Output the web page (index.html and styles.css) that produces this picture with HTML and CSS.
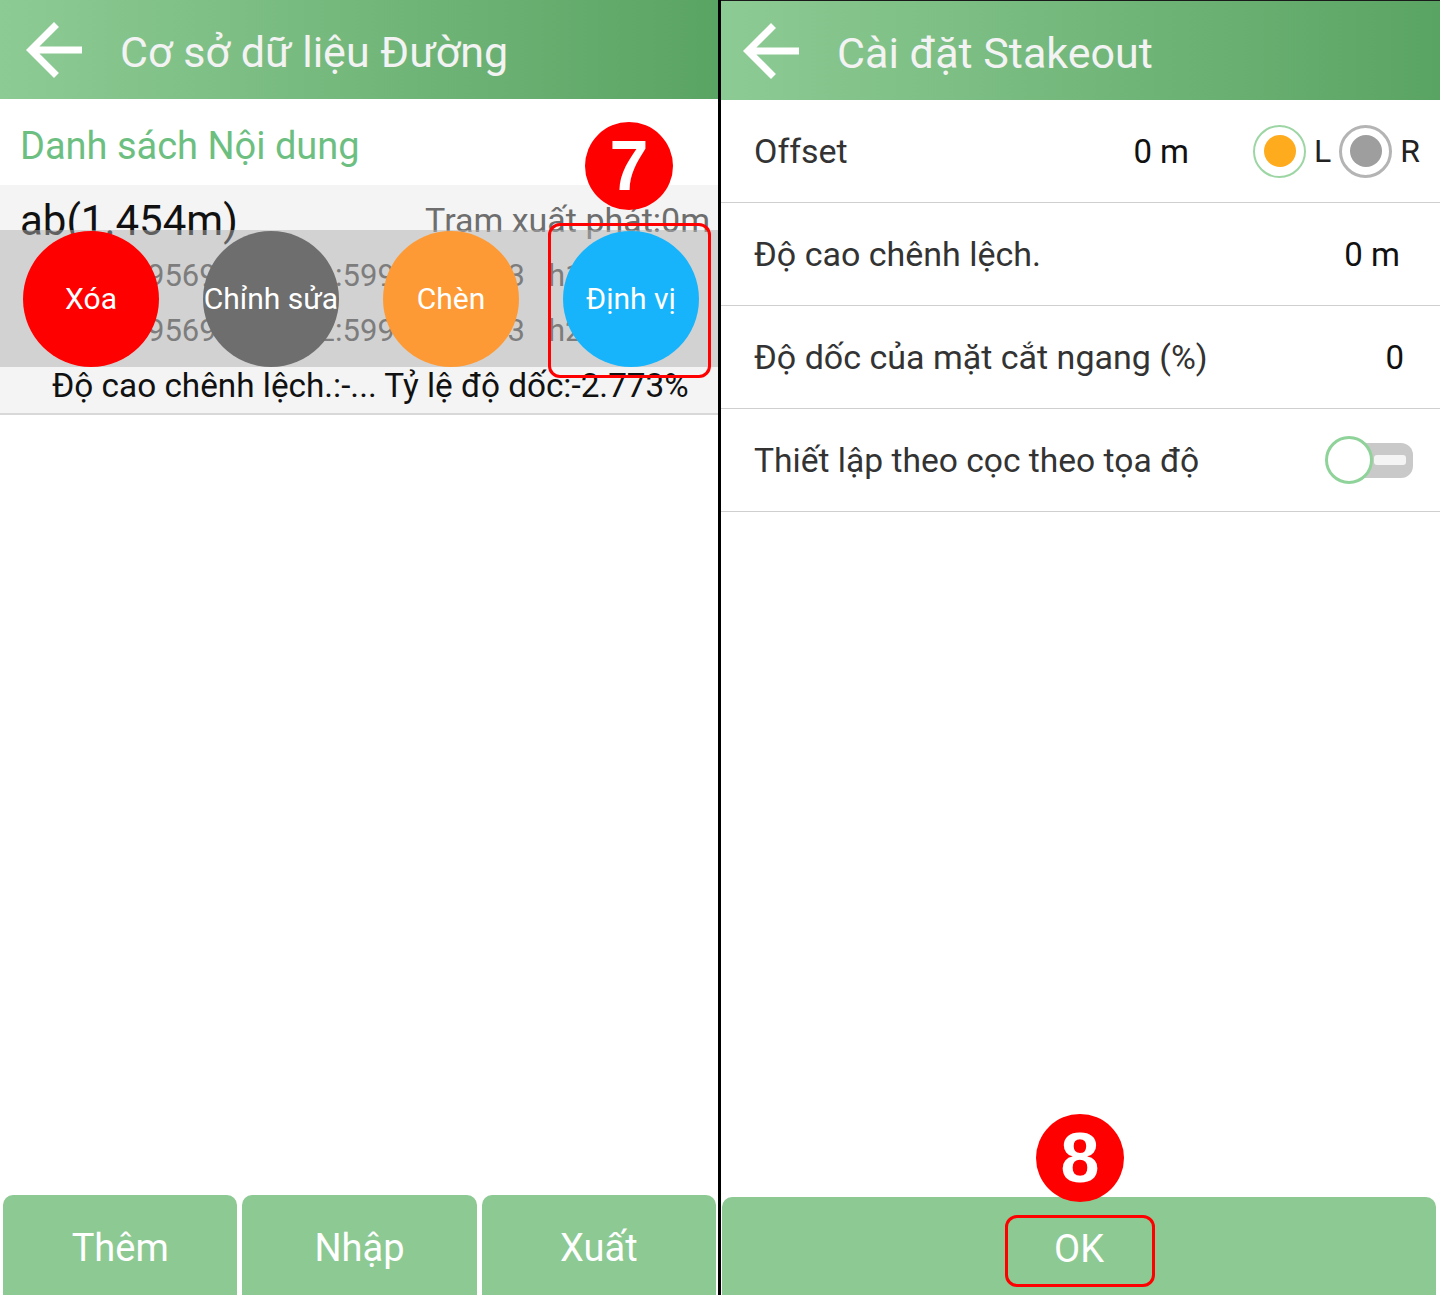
FILE: index.html
```html
<!DOCTYPE html>
<html lang="vi">
<head>
    <meta charset="UTF-8">
    <meta name="viewport" content="width=device-width, initial-scale=1.0">
    <title>Cơ sở dữ liệu Đường</title>
    <link rel="stylesheet" href="styles.css">
</head>
<body>
    <!-- Màn hình danh sách -->
    <section class="panel panel-left">
        <header class="topbar">
            <svg class="back" viewBox="0 0 24 24"><path d="M20 11H7.83l5.59-5.59L12 4l-8 8 8 8 1.41-1.41L7.83 13H20v-2z"/></svg>
            <h1>Cơ sở dữ liệu Đường</h1>
        </header>

        <div class="list-title">Danh sách Nội dung</div>

        <div class="road-row">
            <div class="line line-head">
                <span class="road-name">ab(1.454m)</span>
                <span class="road-start">Tram xuất phát:0m</span>
            </div>
            <div class="line line-coord">
                <span>x:122559569.41</span>
                <span>E1:5998062.153</span>
                <span>h1:0.000</span>
            </div>
            <div class="line line-coord">
                <span>x:122559569.41</span>
                <span>E2:5998062.153</span>
                <span>h2:0.000</span>
            </div>
            <div class="line line-foot">Độ cao chênh lệch.:-... Tỷ lệ độ dốc:-2.773%</div>

            <!-- Thanh thao tác khi vuốt dòng -->
            <div class="swipe-actions">
                <div class="action action-delete">Xóa</div>
                <div class="action action-edit">Chỉnh sửa</div>
                <div class="action action-insert">Chèn</div>
                <div class="action action-locate">Định vị</div>
            </div>
        </div>

        <div class="bottom-bar">
            <div class="btn">Thêm</div>
            <div class="btn">Nhập</div>
            <div class="btn">Xuất</div>
        </div>

        <div class="step-badge step-7">7</div>
        <div class="step-box box-locate"></div>
    </section>

    <div class="divider"></div>

    <!-- Màn hình cài đặt -->
    <section class="panel panel-right">
        <header class="topbar topbar-right">
            <svg class="back" viewBox="0 0 24 24"><path d="M20 11H7.83l5.59-5.59L12 4l-8 8 8 8 1.41-1.41L7.83 13H20v-2z"/></svg>
            <h1>Cài đặt Stakeout</h1>
        </header>

        <div class="setting setting-offset">
            <span class="label">Offset</span>
            <span class="value">0 m</span>
            <div class="radio-group">
                <span class="radio radio-on"><i></i></span>
                <span class="radio-text">L</span>
                <span class="radio radio-off"><i></i></span>
                <span class="radio-text">R</span>
            </div>
        </div>
        <div class="setting setting-height">
            <span class="label">Độ cao chênh lệch.</span>
            <span class="value">0 m</span>
        </div>
        <div class="setting setting-slope">
            <span class="label">Độ dốc của mặt cắt ngang (%)</span>
            <span class="value">0</span>
        </div>
        <div class="setting setting-switch">
            <span class="label">Thiết lập theo cọc theo tọa độ</span>
            <span class="switch"><span class="track"></span><span class="thumb"></span></span>
        </div>

        <div class="ok-bar">
            <div class="btn btn-ok">OK</div>
        </div>

        <div class="step-badge step-8">8</div>
        <div class="step-box box-ok"></div>
    </section>
</body>
</html>
```

FILE: styles.css
```css
* {
    box-sizing: border-box;
}
body {
    margin: 0;
    width: 1440px;
    height: 1295px;
    display: flex;
    background-color: #ffffff;
    font-family: Roboto, "Noto Sans", sans-serif;
    overflow: hidden;
}
.panel {
    position: relative;
    display: flex;
    flex-direction: column;
    height: 1295px;
    background-color: #ffffff;
}
.panel-left {
    width: 718px;
}
.panel-right {
    width: 719px;
}
.divider {
    width: 3px;
    background-color: #000000;
}

/* thanh tiêu đề */
.topbar {
    height: 99px;
    display: flex;
    align-items: center;
    background: linear-gradient(to right, #8dcb94, #5aa463);
    color: #f3f3f3;
}
.topbar-right {
    height: 100px;
    border-top: 1px solid #1a1a1a;
}
.topbar .back {
    width: 84px;
    height: 84px;
    margin-left: 12px;
    fill: #ffffff;
    flex-shrink: 0;
}
.topbar-right .back {
    margin-left: 8px;
}
.topbar h1 {
    margin: 0 0 0 24px;
    font-size: 43px;
    font-weight: 400;
    padding-top: 4px;
}
.topbar-right h1 {
    margin-left: 24px;
}

/* danh sách */
.list-title {
    height: 86px;
    line-height: 86px;
    padding: 4px 0 0 20px;
    font-size: 38px;
    color: #6dbf81;
}
.road-row {
    position: relative;
    padding-top: 8px;
    background-color: #f4f4f4;
    border-bottom: 2px solid #d8d8d8;
    white-space: nowrap;
    overflow: hidden;
}
.line {
    height: 55px;
    line-height: 55px;
}
.line-head {
    display: flex;
    justify-content: space-between;
    align-items: center;
    padding: 0 8px 0 20px;
}
.road-name {
    font-size: 42px;
    color: #111111;
}
.road-start {
    font-size: 34px;
    color: #6e6e6e;
}
.line-coord {
    display: grid;
    grid-template-columns: 263px 248px auto;
    padding-left: 37px;
    font-size: 31px;
    color: #4a4a4a;
}
.line-foot {
    padding-left: 52px;
    font-size: 33.3px;
    color: #111111;
}
.swipe-actions {
    position: absolute;
    top: 45px;
    left: 0;
    right: 0;
    height: 137px;
    display: flex;
    align-items: center;
    gap: 44px;
    padding-left: 23px;
    background-color: rgba(176, 176, 176, 0.5);
}
.action {
    width: 136px;
    height: 136px;
    border-radius: 50%;
    display: flex;
    align-items: center;
    justify-content: center;
    font-size: 30px;
    color: #ffffff;
    flex-shrink: 0;
}
.action-delete { background-color: #ff0000; }
.action-edit { background-color: #6e6e6e; }
.action-insert { background-color: #fd9a36; }
.action-locate { background-color: #18b4fb; }

/* nút dưới cùng */
.bottom-bar {
    margin-top: auto;
    height: 100px;
    display: grid;
    grid-template-columns: repeat(3, 1fr);
    gap: 5px;
    padding: 0 2px 0 3px;
}
.btn {
    display: flex;
    align-items: center;
    justify-content: center;
    padding-top: 6px;
    background-color: #8dc993;
    border-radius: 10px 10px 0 0;
    color: #ffffff;
    font-size: 38px;
}
.ok-bar {
    margin-top: auto;
    height: 98px;
    display: flex;
    padding-right: 4px;
    padding-left: 1px;
}
.btn-ok {
    flex: 1;
}

/* cài đặt */
.setting {
    height: 103px;
    display: flex;
    align-items: center;
    padding-left: 33px;
    border-bottom: 1px solid #cfcfcf;
    font-size: 33px;
}
.setting .label {
    flex: 1;
    font-size: 34px;
    color: #333333;
}
.setting .value {
    color: #111111;
}
.setting-offset {
    padding-right: 20px;
}
.setting-offset .value {
    margin-right: 64px;
}
.setting-height {
    padding-right: 40px;
}
.setting-slope {
    padding-right: 36px;
}
.setting-switch {
    padding-right: 27px;
}
.setting-switch .label {
    font-size: 33.6px;
}
.radio-group {
    display: flex;
    align-items: center;
    gap: 8px;
}
.radio {
    width: 53px;
    height: 53px;
    border-radius: 50%;
    display: flex;
    align-items: center;
    justify-content: center;
}
.radio i {
    width: 32px;
    height: 32px;
    border-radius: 50%;
}
.radio-on {
    border: 2px solid #9dd6a4;
}
.radio-on i {
    background-color: #ffab1e;
}
.radio-off {
    border: 3px solid #b4b4b4;
}
.radio-off i {
    background-color: #9e9e9e;
}
.radio-text {
    font-size: 32px;
    color: #222222;
}
.switch {
    position: relative;
    width: 88px;
    height: 48px;
    display: flex;
    align-items: center;
}
.switch .track {
    margin-left: 28px;
    width: 60px;
    height: 35px;
    border-radius: 12px;
    background-color: #c9c9c9;
    display: flex;
    align-items: center;
    justify-content: flex-end;
    padding-right: 7px;
}
.switch .track::after {
    content: "";
    width: 32px;
    height: 10px;
    border-radius: 3px;
    background-color: #f4f4f4;
}
.switch .thumb {
    position: absolute;
    left: 0;
    top: 0;
    width: 48px;
    height: 48px;
    border-radius: 50%;
    background-color: #ffffff;
    border: 3px solid #8fd39a;
}

/* đánh dấu bước */
.step-badge {
    position: absolute;
    width: 88px;
    height: 88px;
    border-radius: 50%;
    background-color: #ff0000;
    color: #ffffff;
    font-family: "Liberation Sans", Arial, sans-serif;
    font-weight: 700;
    font-size: 70px;
    display: flex;
    align-items: center;
    justify-content: center;
}
.step-7 {
    left: 585px;
    top: 122px;
}
.step-8 {
    left: 315px;
    top: 1114px;
}
.step-box {
    position: absolute;
    border: 3px solid #ff0000;
    border-radius: 12px;
}
.box-locate {
    left: 548px;
    top: 223px;
    width: 163px;
    height: 155px;
}
.box-ok {
    left: 284px;
    top: 1215px;
    width: 150px;
    height: 72px;
}
```
